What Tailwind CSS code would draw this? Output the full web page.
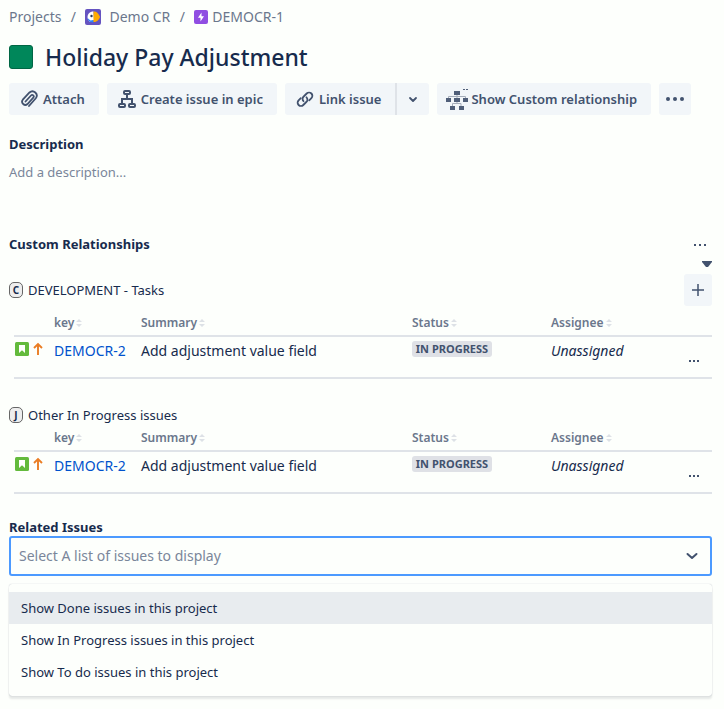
<!DOCTYPE html>
<html lang="en">

<head>
    <meta charset="UTF-8">
    <meta name="viewport" content="width=device-width, initial-scale=1.0">
    <title>Holiday Pay Adjustment</title>
    <script src="https://cdn.jsdelivr.net/npm/@tailwindcss/browser@4"></script>
</head>

<body class="bg-[#fdfffc] pr-3 pb-3 pl-[9px] font-['Noto_Sans','Open_Sans',sans-serif] text-[13px] leading-5 text-[#172b4d]">
    <!-- Icons used more than once -->
    <svg class="hidden">
        <symbol id="sort" viewBox="0 0 6 8">
            <path d="M3 0 6 3H0zM3 8 0 5h6z" fill="#dde1e6" />
        </symbol>
        <symbol id="story" viewBox="0 0 14 14">
            <rect width="14" height="14" rx="1.5" fill="#63ba3c" />
            <path d="M4 3h6v8L7 8.3 4 11z" fill="#fff" />
        </symbol>
        <symbol id="priority" viewBox="0 0 10 14">
            <path d="M5 13V2M1 6l4-4 4 4" fill="none" stroke="#ea7d24" stroke-width="1.9" />
        </symbol>
    </svg>

    <!-- Breadcrumbs -->
    <nav class="flex items-center pt-[7px] text-sm leading-5 text-[#6b778c]">
        <a href="#">Projects</a>
        <span class="w-6 text-center">/</span>
        <a href="#" class="flex items-center gap-2">
            <svg class="size-4" viewBox="0 0 16 16">
                <rect width="16" height="16" rx="2" fill="#6554c0" />
                <path d="M8.5 2.500C4.500 2.500 2.500 5 2.500 8c0 2 1 3.800 2.500 5L9 11z" fill="#fff" />
                <path d="M2.500 9C3 12 5.500 13.500 8.500 13.500V11L5.500 11.500z" fill="#2684ff" />
                <path d="M8.500 2.500c3.500 0 5 2 6.500 5.500-1.500 3.500-3 5-6.500 5z" fill="#ffab00" />
                <circle cx="6.500" cy="7" r="1.200" fill="#253858" />
            </svg>
            Demo CR
        </a>
        <span class="w-6 text-center">/</span>
        <a href="#" class="flex items-center gap-1">
            <svg class="size-[14px]" viewBox="0 0 14 14">
                <rect width="14" height="14" rx="2" fill="#904ee2" />
                <path d="M7.500 2.500 4 7.700h2.500v3.800L10 6.300H7.500z" fill="#fff" />
            </svg>
            DEMOCR-1
        </a>
    </nav>

    <!-- Title -->
    <header class="mt-[14px] flex items-center gap-3">
        <button aria-label="Epic colour" class="size-6 rounded-[3px] border border-[#006644] bg-[#00875a]"></button>
        <h1 class="text-[23px] leading-8 font-medium">Holiday Pay Adjustment</h1>
    </header>

    <!-- Toolbar -->
    <div class="mt-[10px] flex gap-2 font-semibold whitespace-nowrap text-[#42526e]">
        <button class="flex h-8 items-center gap-1 rounded-[3px] bg-[#f2f6f9] pr-[14px] pl-[10px]">
            <svg class="size-5" viewBox="0 0 20 20" fill="none" stroke="#42526e" stroke-width="1.800" stroke-linecap="round">
                <path d="m6.500 12.500 5.500-6a1.500 1.500 0 0 1 2.300 2.200l-5.800 6.300a3.200 3.200 0 0 1-4.700-4.300l6.700-7.200a4.300 4.300 0 0 1 6.300 5.800L10 17" />
            </svg>
            Attach
        </button>
        <button class="flex h-8 items-center gap-1 rounded-[3px] bg-[#f2f6f9] pr-[14px] pl-[10px]">
            <svg class="size-5" viewBox="0 0 20 20" fill="none" stroke="#42526e" stroke-width="2">
                <rect x="7" y="2" width="6" height="3" rx="1" />
                <rect x="2" y="15" width="6" height="3" rx="1" />
                <rect x="12" y="15" width="6" height="3" rx="1" />
                <path d="M10 5v5M5 15v-5h10v5" />
            </svg>
            Create issue in epic
        </button>
        <div class="flex">
            <button class="flex h-8 items-center gap-1 rounded-l-[3px] border-r-2 border-[#dfe3e8] bg-[#f2f6f9] pr-[14px] pl-[10px]">
                <svg class="size-5" viewBox="0 0 20 20" fill="none" stroke="#42526e" stroke-width="1.800" stroke-linecap="round">
                    <path d="M8.500 12.200a3.200 3.200 0 0 1 .2-4.700l3-3a3.300 3.300 0 0 1 4.700 4.700l-2.200 2.200" />
                    <path d="M11.500 8.300a3.200 3.200 0 0 1-.2 4.700l-3 3a3.300 3.300 0 0 1-4.700-4.700l2.200-2.200" />
                </svg>
                Link issue
            </button>
            <button aria-label="More link options" class="grid h-8 w-8 place-items-center rounded-r-[3px] bg-[#f2f6f9]">
                <svg class="size-4" viewBox="0 0 16 16" fill="none" stroke="#42526e" stroke-width="1.800" stroke-linecap="round" stroke-linejoin="round">
                    <path d="m5 7 3 3 3-3" />
                </svg>
            </button>
        </div>
        <button class="flex h-8 items-center gap-[2px] rounded-[3px] bg-[#f2f6f9] pr-[14px] pl-2">
            <svg class="size-6" viewBox="0 0 24 24" fill="#505f79">
                <path d="M12 7v4M3.500 11V9.500h17V11M12 14v2.500M7.500 19v-2.500h8.500V19" fill="none" stroke="#a5adba" />
                <path d="M9 4h6v4H9zM1 11h5v4H1zM9 11h6v4H9zM18 11h5v4h-5zM5 19h5v4H5zM14 19h5v4h-5z" />
                <path d="M18 2h2v1h-2zM21 2h2v1h-2z" />
            </svg>
            Show Custom relationship
        </button>
        <button aria-label="More actions" class="grid h-8 w-8 place-items-center rounded-[3px] bg-[#f2f6f9]">
            <svg class="h-4 w-5" viewBox="0 0 20 16" fill="#42526e">
                <circle cx="3" cy="8" r="2" />
                <circle cx="10" cy="8" r="2" />
                <circle cx="17" cy="8" r="2" />
            </svg>
        </button>
    </div>

    <!-- Description -->
    <section class="mt-[19px]">
        <h2 class="font-bold">Description</h2>
        <p class="mt-2 text-[#7a869a]">Add a description...</p>
    </section>

    <!-- Custom relationships -->
    <section class="mt-[52px]">
        <div class="flex items-center justify-between">
            <h2 class="font-bold">Custom Relationships</h2>
            <button aria-label="Relationship options" class="pr-[6px]">
                <svg class="h-3 w-3" viewBox="0 0 12 12" fill="#42526e">
                    <path d="M0 6h2v2H0zM5 6h2v2H5zM10 6h2v2h-2z" />
                </svg>
            </button>
        </div>
        <div class="flex h-5 items-center justify-end">
            <button aria-label="Collapse">
                <svg class="h-[6px] w-[10px]" viewBox="0 0 10 6" fill="#42526e">
                    <path d="M0 0h10v1L6 6H4L0 1z" />
                </svg>
            </button>
        </div>

        <div class="flex h-8 items-center justify-between">
            <h3 class="flex items-center gap-[5px]">
                <span class="grid h-4 w-[14px] place-items-center rounded-[5px] border border-[#666] bg-[#eee] text-[10px] leading-3 font-bold">C</span>
                <span>DEVELOPMENT - Tasks</span>
            </h3>
            <button aria-label="Add task" class="grid h-8 w-7 place-items-center rounded-[3px] bg-[#f2f6f9]">
                <svg class="size-3" viewBox="0 0 12 12" stroke="#42526e" stroke-width="1.500">
                    <path d="M6 0v12M0 6h12" />
                </svg>
            </button>
        </div>
        <div class="mt-[6px] pl-[5px]">
            <table class="w-full table-fixed text-left text-sm leading-5">
                <thead class="border-b-2 border-[#dfe3e8] text-xs text-[#6b778c]">
                    <tr class="h-6">
                        <th class="w-10"></th>
                        <th class="w-[87px] pb-[2px] font-semibold"><button class="flex items-center gap-[2px]">key <svg class="h-2 w-[6px]"><use href="#sort" /></svg></button></th>
                        <th class="pb-[2px] font-semibold"><button class="flex items-center gap-[2px]">Summary <svg class="h-2 w-[6px]"><use href="#sort" /></svg></button></th>
                        <th class="w-[139px] pb-[2px] font-semibold"><button class="flex items-center gap-[2px]">Status <svg class="h-2 w-[6px]"><use href="#sort" /></svg></button></th>
                        <th class="w-[137px] pb-[2px] font-semibold"><button class="flex items-center gap-[2px]">Assignee <svg class="h-2 w-[6px]"><use href="#sort" /></svg></button></th>
                        <th class="w-6"></th>
                    </tr>
                </thead>
                <tbody class="border-b-2 border-[#dfe3e8]">
                    <tr class="h-[42px] align-top">
                        <td class="pt-[5px]">
                            <div class="flex gap-1 pl-px">
                                <svg class="size-[14px]"><use href="#story" /></svg>
                                <svg class="h-[14px] w-[10px]"><use href="#priority" /></svg>
                            </div>
                        </td>
                        <td class="pt-1"><a href="#" class="text-[#0052cc]">DEMOCR-2</a></td>
                        <td class="pt-1">Add adjustment value field</td>
                        <td class="pt-1"><span class="block w-20 rounded-[3px] bg-[#dfe1e6] text-center text-[11px] leading-4 font-bold text-[#42526e]">IN PROGRESS</span></td>
                        <td class="pt-1 italic">Unassigned</td>
                        <td class="pt-[21px]">
                            <button aria-label="Issue actions" class="block">
                                <svg class="h-[6px] w-3" viewBox="0 0 12 6" fill="#42526e">
                                    <path d="M1 2h2v2H1zM5 2h2v2H5zM9 2h2v2H9z" />
                                </svg>
                            </button>
                        </td>
                    </tr>
                </tbody>
            </table>
        </div>

        <h3 class="mt-[26px] flex items-center gap-[5px]">
            <span class="grid h-4 w-[14px] place-items-center rounded-[5px] border border-[#666] bg-[#eee] text-[10px] leading-3 font-bold">J</span>
            Other In Progress issues
        </h3>
        <div class="mt-[2px] pl-[5px]">
            <table class="w-full table-fixed text-left text-sm leading-5">
                <thead class="border-b-2 border-[#dfe3e8] text-xs text-[#6b778c]">
                    <tr class="h-6">
                        <th class="w-10"></th>
                        <th class="w-[87px] pb-[2px] font-semibold"><button class="flex items-center gap-[2px]">key <svg class="h-2 w-[6px]"><use href="#sort" /></svg></button></th>
                        <th class="pb-[2px] font-semibold"><button class="flex items-center gap-[2px]">Summary <svg class="h-2 w-[6px]"><use href="#sort" /></svg></button></th>
                        <th class="w-[139px] pb-[2px] font-semibold"><button class="flex items-center gap-[2px]">Status <svg class="h-2 w-[6px]"><use href="#sort" /></svg></button></th>
                        <th class="w-[137px] pb-[2px] font-semibold"><button class="flex items-center gap-[2px]">Assignee <svg class="h-2 w-[6px]"><use href="#sort" /></svg></button></th>
                        <th class="w-6"></th>
                    </tr>
                </thead>
                <tbody class="border-b-2 border-[#dfe3e8]">
                    <tr class="h-[42px] align-top">
                        <td class="pt-[5px]">
                            <div class="flex gap-1 pl-px">
                                <svg class="size-[14px]"><use href="#story" /></svg>
                                <svg class="h-[14px] w-[10px]"><use href="#priority" /></svg>
                            </div>
                        </td>
                        <td class="pt-1"><a href="#" class="text-[#0052cc]">DEMOCR-2</a></td>
                        <td class="pt-1">Add adjustment value field</td>
                        <td class="pt-1"><span class="block w-20 rounded-[3px] bg-[#dfe1e6] text-center text-[11px] leading-4 font-bold text-[#42526e]">IN PROGRESS</span></td>
                        <td class="pt-1 italic">Unassigned</td>
                        <td class="pt-[21px]">
                            <button aria-label="Issue actions" class="block">
                                <svg class="h-[6px] w-3" viewBox="0 0 12 6" fill="#42526e">
                                    <path d="M1 2h2v2H1zM5 2h2v2H5zM9 2h2v2H9z" />
                                </svg>
                            </button>
                        </td>
                    </tr>
                </tbody>
            </table>
        </div>
    </section>

    <!-- Related issues -->
    <section class="mt-6">
        <label for="related" class="block leading-[18px] font-bold">Related Issues</label>
        <div class="grid items-center">
            <select id="related" class="col-start-1 row-start-1 h-10 w-full appearance-none rounded-[3px] border-2 border-[#4c9aff] px-2 text-sm text-[#7a869a] outline-none">
                <option>Select A list of issues to display</option>
            </select>
            <svg class="pointer-events-none col-start-1 row-start-1 mr-3 size-4 justify-self-end" viewBox="0 0 16 16" fill="none" stroke="#42526e" stroke-width="2" stroke-linecap="round" stroke-linejoin="round">
                <path d="m3.500 6 4.500 4 4.500-4" />
            </svg>
        </div>
        <ul class="mt-2 rounded-[3px] py-2 shadow-[0_0_1px_#091e4250,0_3px_2px_#09132418]">
            <li><button class="block w-full bg-[#e8ecef] px-3 py-[6px] text-left">Show Done issues in this project</button></li>
            <li><button class="block w-full px-3 py-[6px] text-left">Show In Progress issues in this project</button></li>
            <li><button class="block w-full px-3 py-[6px] text-left">Show To do issues in this project</button></li>
        </ul>
    </section>
</body>

</html>
